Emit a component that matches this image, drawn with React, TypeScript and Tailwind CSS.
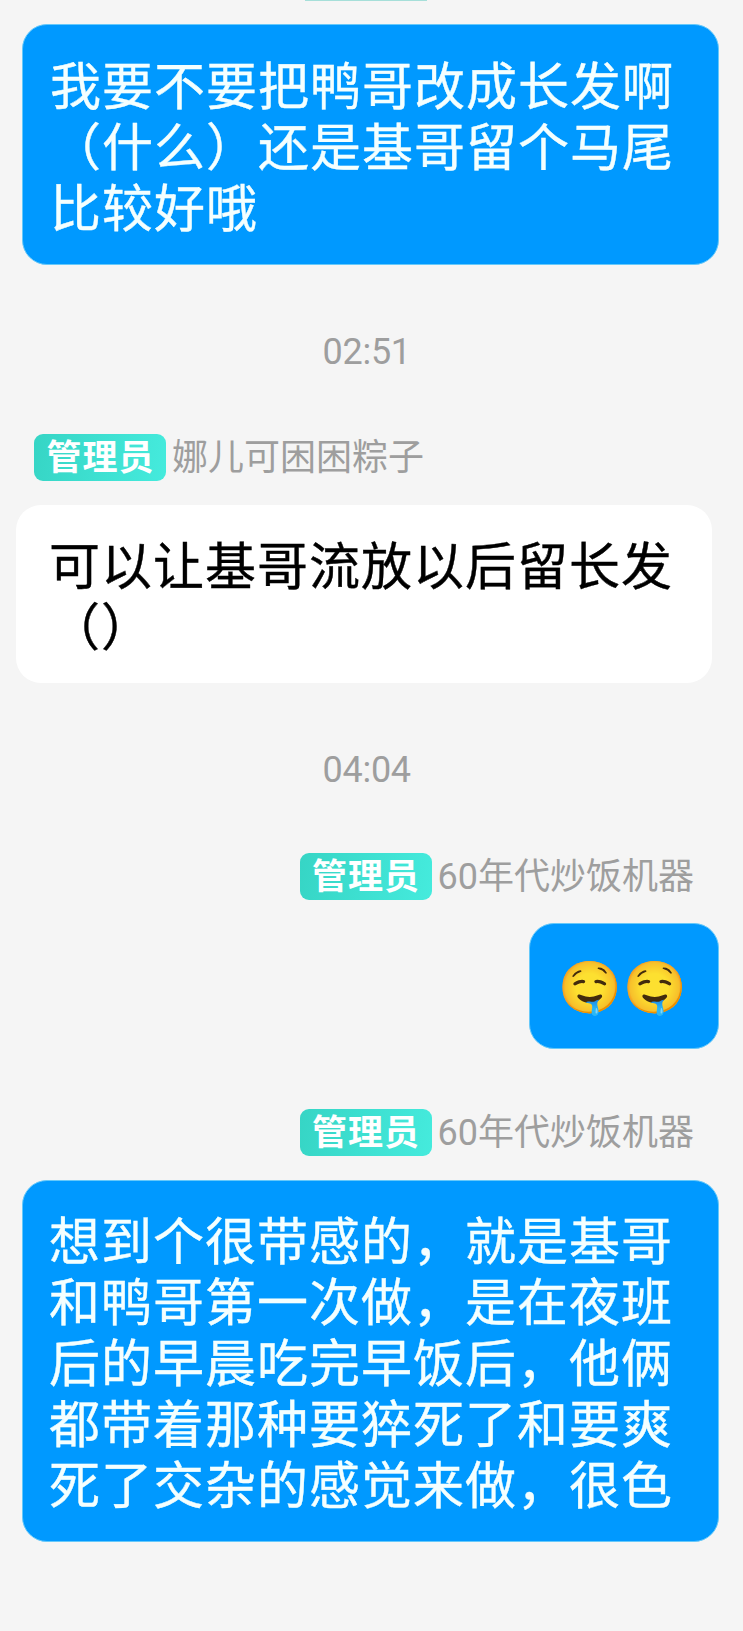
import { ReactNode } from 'react';
import clsx from 'clsx';

interface SenderProps { name: string; own?: boolean; }

function Sender({ name, own }: SenderProps) {
  return (
    <div
      className={clsx(
        'flex h-12 items-center text-[36px] leading-[48px]',
        own ? 'justify-end pr-[49px]' : 'pl-[34px]'
      )}
    >
      <span className="flex h-[47px] w-[132px] items-center justify-center rounded-[9px] bg-linear-100 from-[#36d5c5] to-[#45ebdd] pl-px pt-[3px] text-[35px] font-bold tracking-[1px] text-white">
        管理员
      </span>
      <span className="ml-[6px] pt-[2px] text-[#9e9e9e]">{name}</span>
    </div>
  );
}

function TimeLabel({ children }: { children: ReactNode }) {
  return (
    <div className="pl-[322.6px] font-[Roboto] text-[36px] leading-[42px] tracking-[-0.3px] text-[#9e9e9e]">
      {children}
    </div>
  );
}

interface BubbleProps { own?: boolean; className?: string; children: ReactNode; }

function Bubble({ own, className, children }: BubbleProps) {
  return (
    <div
      className={clsx(
        'rounded-[25px] text-[51px] leading-[61px] tracking-[1px] [-webkit-text-stroke:0.4px]',
        own
          ? 'ml-auto mr-[24px] border border-[#66c9fa] bg-[#0099ff] text-[#f4ffff]'
          : 'ml-[16px] bg-white text-black',
        className
      )}
    >
      {children}
    </div>
  );
}

export default function App() {
  return (
    <div className="flex h-[1631px] w-[743px] flex-col overflow-hidden bg-[#f5f5f5] font-['Roboto','Noto_Sans_CJK_SC',sans-serif]">
      {/* Tail of the previous sender badge */}
      <div className="ml-[305px] h-px w-[122px] bg-[#a6dfd9]" />

      <Bubble own className="mt-[23px] h-[241px] w-[697px] pl-[27px] pt-[32px]">
        我要不要把鸭哥改成长发啊（什么）还是基哥留个马尾比较好哦
      </Bubble>

      <div className="mt-[66px]">
        <TimeLabel>02:51</TimeLabel>
      </div>

      <div className="mt-[60px]">
        <Sender name="娜儿可困困粽子" />
      </div>
      <Bubble className="mt-[24px] h-[178px] w-[696px] pl-[33px] pr-[30px] pt-[32px]">
        可以让基哥流放以后留长发（）
      </Bubble>

      <div className="mt-[66px]">
        <TimeLabel>04:04</TimeLabel>
      </div>

      <div className="mt-[61px]">
        <Sender own name="60年代炒饭机器" />
      </div>
      <Bubble own className="mt-[23px] flex h-[126px] w-[190px] items-center justify-center pr-[2px] pt-[3px]">
        🤤🤤
      </Bubble>

      <div className="mt-[59px]">
        <Sender own name="60年代炒饭机器" />
      </div>
      <Bubble own className="mt-[24px] h-[362px] w-[697px] pl-[26px] pt-[31px]">
        想到个很带感的，就是基哥和鸭哥第一次做，是在夜班后的早晨吃完早饭后，他俩都带着那种要猝死了和要爽死了交杂的感觉来做，很色
      </Bubble>
    </div>
  );
}
